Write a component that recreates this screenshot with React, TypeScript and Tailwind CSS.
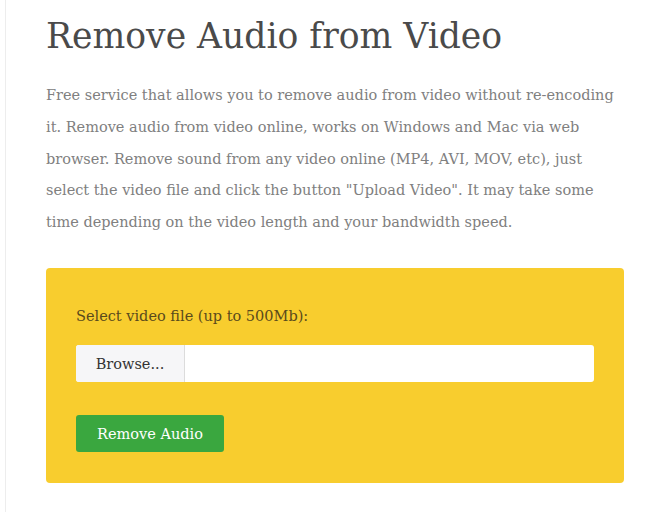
export default function App() {
  return (
    <div className="min-h-screen bg-white" style={{ fontFamily: '"DejaVu Serif", serif' }}>
      <div className="ml-[5px] min-h-screen border-l border-[#ededed] pl-[40px] pr-[35px] pt-[14px]">
        <h1 className="text-[34.6px] leading-[44px] text-[#4a4a4a]">Remove Audio from Video</h1>

        <p className="mt-[22px] text-[14.5px] leading-[31.75px] text-[#808080]">
          Free service that allows you to remove audio from video without re-encoding it. Remove audio
          from video online, works on Windows and Mac via web browser. Remove sound from any video online
          (MP4, AVI, MOV, etc), just select the video file and click the button "Upload Video". It may take
          some time depending on the video length and your bandwidth speed.
        </p>

        <form className="mt-[29px] w-[578px] rounded-[4px] bg-[#f8cd2e] px-[30px] pt-[36px] pb-[31px]">
          <label className="block text-[14.5px] leading-[24px] text-[#5a4a1c]">Select video file (up to 500Mb):</label>

          <div className="mt-[17px] flex h-[37px] w-[518px] overflow-hidden rounded-[3px] bg-white">
            <span className="flex w-[109px] items-center justify-center border-r border-[#dcdcdc] bg-[#f6f6f8] pt-[4px] text-[14.5px] text-[#333]">
              Browse...
            </span>
            <span className="flex-1" />
          </div>

          <button
            type="button"
            className="mt-[33px] h-[37px] w-[148px] rounded-[3px] bg-[#3aa73f] pt-[4px] text-[14.5px] text-white"
          >
            Remove Audio
          </button>
        </form>
      </div>
    </div>
  );
}
